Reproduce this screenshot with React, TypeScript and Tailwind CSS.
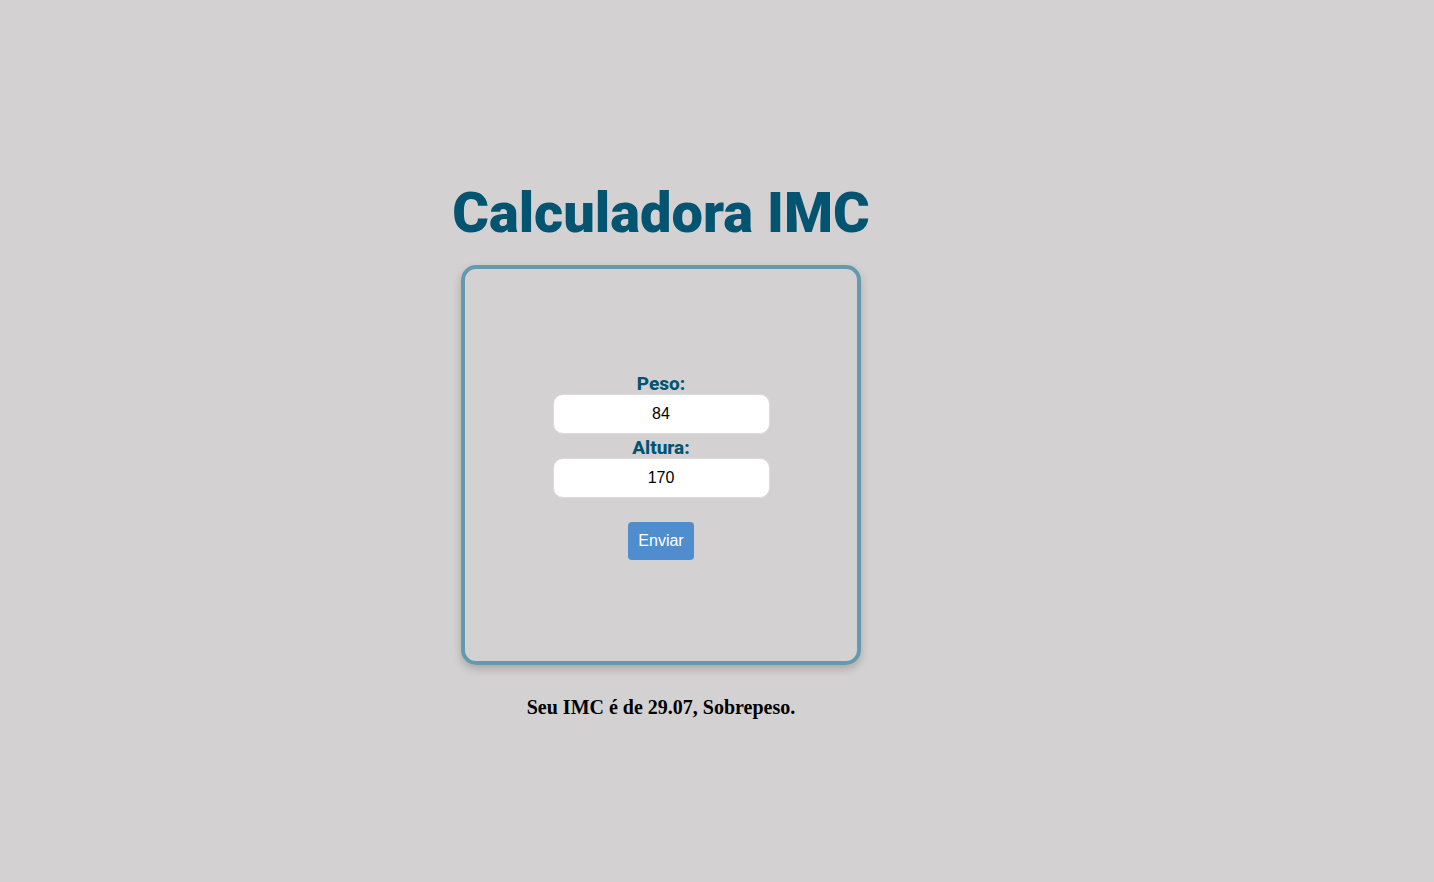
import { useState, type FormEvent } from "react";

function classify(bmi: number): string {
  if (bmi < 18.5) return "Abaixo do peso";
  if (bmi < 25) return "Peso normal";
  if (bmi < 30) return "Sobrepeso";
  return "Obesidade";
}

function describe(weight: string, height: string): string {
  const meters = Number(height) / 100;
  const bmi = Number(weight) / (meters * meters);
  if (!Number.isFinite(bmi) || bmi <= 0) return "Preencha os campos corretamente.";
  return `Seu IMC é de ${bmi.toFixed(2)}, ${classify(bmi)}.`;
}

type FieldProps = {
  id: string;
  label: string;
  value: string;
  onChange: (value: string) => void;
};

function Field({ id, label, value, onChange }: FieldProps) {
  return (
    <div className="flex w-full max-w-[217px] flex-col items-center">
      <label
        htmlFor={id}
        className="pt-1 font-['Roboto',sans-serif] text-[19px] leading-5 font-extrabold text-[#035470]"
      >
        {label}
      </label>
      <input
        id={id}
        type="text"
        inputMode="decimal"
        value={value}
        onChange={(event) => onChange(event.target.value)}
        className="h-10 w-full rounded-[10px] border border-[#dddddd] bg-white px-2 text-center text-base text-black outline-none"
      />
    </div>
  );
}

export default function App() {
  const [weight, setWeight] = useState("84");
  const [height, setHeight] = useState("170");
  const [result, setResult] = useState(() => describe("84", "170"));

  function handleSubmit(event: FormEvent) {
    event.preventDefault();
    setResult(describe(weight, height));
  }

  return (
    <main className="flex min-h-screen flex-col items-center justify-center bg-[#d4d1d2] pt-3.5 font-['Liberation_Sans',Arial,sans-serif] lg:pr-28">
      <h1 className="mb-4 text-center font-['Roboto',sans-serif] text-[56px] leading-[72px] font-black text-[#035470]">
        Calculadora IMC
      </h1>
      <form
        onSubmit={handleSubmit}
        className="flex aspect-square w-full max-w-[400px] flex-col items-center justify-center rounded-[15px] border-4 border-[#659aae] shadow-[0_4px_8px_rgba(0,0,0,0.2)]"
      >
        <Field id="peso" label="Peso:" value={weight} onChange={setWeight} />
        <Field id="altura" label="Altura:" value={height} onChange={setHeight} />
        <button
          type="submit"
          className="mt-6 h-[38px] cursor-pointer rounded-sm bg-[#4f8dcf] px-2.5 text-base text-white"
        >
          Enviar
        </button>
      </form>
      <p className="mt-[30px] text-center font-['Liberation_Serif','Times_New_Roman',serif] text-[20px] leading-6 font-bold text-black">
        {result}
      </p>
    </main>
  );
}
